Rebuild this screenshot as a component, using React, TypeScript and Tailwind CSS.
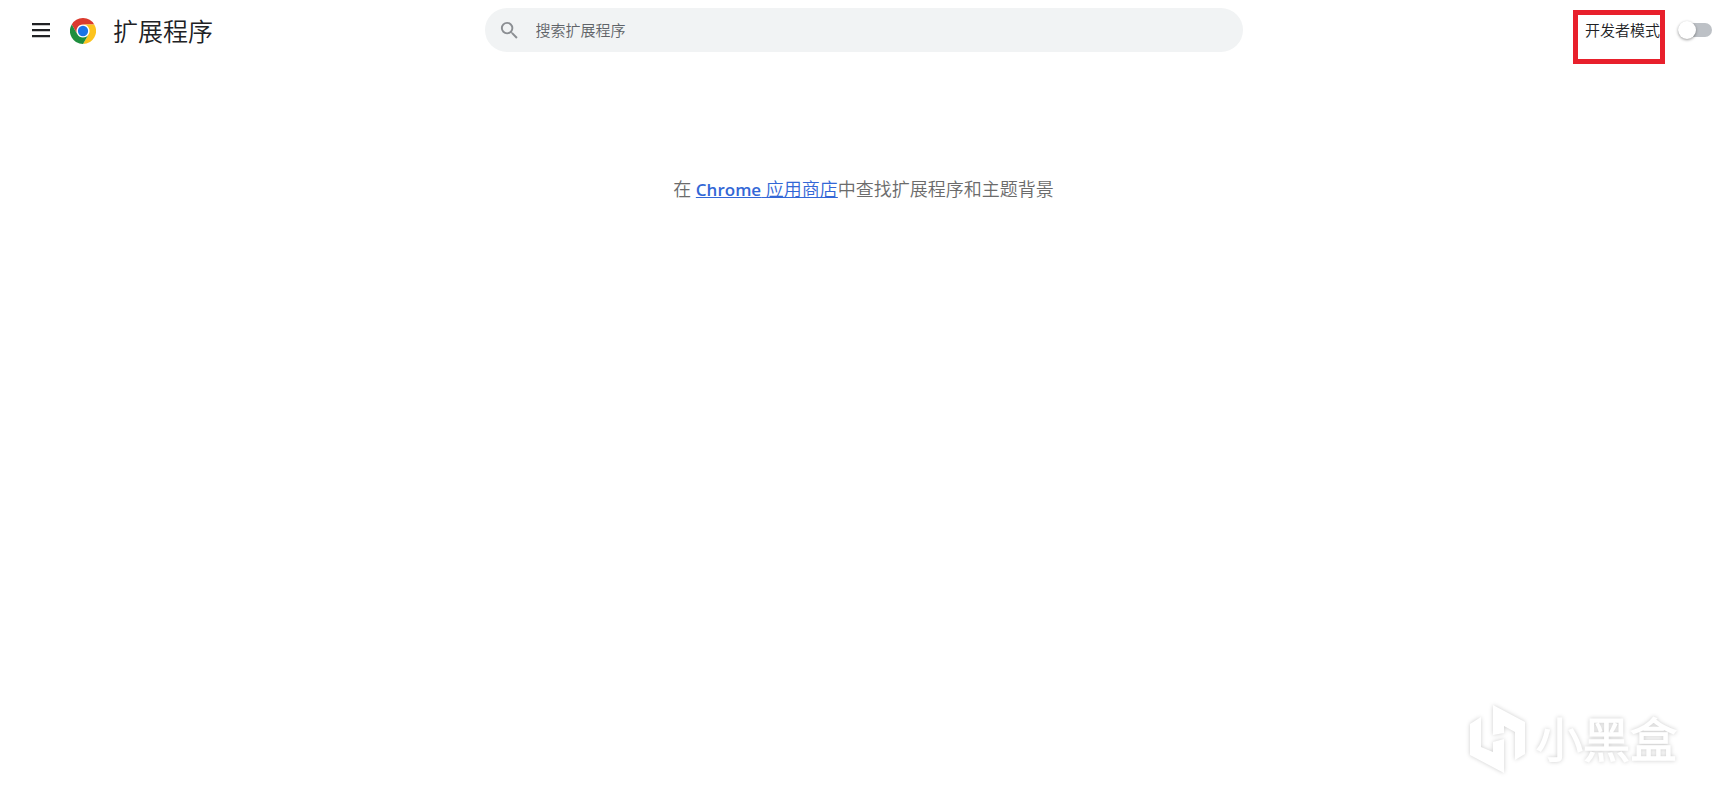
import React, { useState } from 'react';

const MenuIcon: React.FC = () => (
  <svg viewBox="0 0 24 24" className="h-6 w-6" fill="#202124" aria-hidden="true">
    <path d="M3 5h18v2.2H3V5zm0 6h18v2.2H3V11zm0 6h18v2.2H3V17z" />
  </svg>
);

const ChromeLogo: React.FC = () => (
  <svg viewBox="0 0 48 48" className="h-[26px] w-[26px]" aria-hidden="true">
    <circle cx="24" cy="24" r="12" fill="#fff" />
    <path d="M24 12H44.7812A23.9939 23.9939 0 0 0 3.2156 12.0029L13.6079 30L13.6172 29.9976A11.9852 11.9852 0 0 1 24 12Z" fill="#DB3B2E" />
    <circle cx="24" cy="24" r="9.5" fill="#1A73E8" />
    <path d="M34.3913 30.0029L24.0007 48A23.994 23.994 0 0 0 44.78 12.0031H23.9989L23.9962 12.0125A11.985 11.985 0 0 1 34.3913 30.0029Z" fill="#FCC31E" />
    <path d="M13.6086 30.0031L3.218 12.006A23.994 23.994 0 0 0 24.0025 48L34.3931 30.0029L34.3863 29.996A11.9852 11.9852 0 0 1 13.6086 30.0031Z" fill="#1E8E3E" />
  </svg>
);

const SearchIcon: React.FC = () => (
  <svg viewBox="0 0 24 24" className="h-[23px] w-[23px] shrink-0" fill="#8b8e92" aria-hidden="true">
    <path d="M15.5 14h-.79l-.28-.27A6.471 6.471 0 0 0 16 9.5 6.5 6.5 0 1 0 9.5 16c1.61 0 3.09-.59 4.23-1.57l.27.28v.79l5 4.99L20.49 19l-4.99-5zm-6 0C7.01 14 5 11.99 5 9.5S7.01 5 9.5 5 14 7.01 14 9.5 11.99 14 9.5 14z" />
  </svg>
);

const Watermark: React.FC = () => (
  <div className="pointer-events-none fixed right-[50px] bottom-5 flex items-center gap-2 drop-shadow-[0_0_2px_rgba(0,0,0,0.2)]">
    <svg viewBox="0 0 60 70" className="h-[70px] w-[60px]" fill="#fff" aria-hidden="true">
      <path d="M2 20 13 13V43L25 48V38L36 35V69L2 51Z" />
      <path d="M25 1 57 18V50L47 56V28L36 22V29L25 31Z" />
    </svg>
    <span className="text-[47px] leading-[60px] font-bold text-white">小黑盒</span>
  </div>
);

const App: React.FC = () => {
  const [query, setQuery] = useState('');
  const [devMode, setDevMode] = useState(false);

  return (
    <div className="min-h-screen bg-white font-['Open_Sans','Noto_Sans_CJK_SC_DemiLight','Noto_Sans_CJK_SC',sans-serif] font-[350]">
      <header className="grid h-[60px] grid-cols-[1fr_minmax(0,758px)_1fr] items-center px-[15px]">
        <div className="flex items-center pl-[14px]">
          <button type="button" aria-label="主菜单" className="mr-[17px]">
            <MenuIcon />
          </button>
          <div className="flex items-center pt-0.5">
            <ChromeLogo />
            <h1 className="ml-[17px] text-[25px] leading-8 text-[#202124]">扩展程序</h1>
          </div>
        </div>

        <label className="flex h-11 items-center rounded-full bg-[#f1f3f4] pr-4 pl-[13px]">
          <SearchIcon />
          <input
            type="text"
            aria-label="搜索扩展程序"
            placeholder="搜索扩展程序"
            value={query}
            onChange={(e) => setQuery(e.target.value)}
            className="ml-[15px] w-full bg-transparent text-[15px] leading-5 text-[#202124] outline-none placeholder:text-[#5f6368]"
          />
        </label>

        <div className="flex items-center justify-end">
          <label htmlFor="dev-mode" className="relative text-[15px] leading-5 text-[#202124]">
            开发者模式
            <span className="pointer-events-none absolute -top-[10px] -right-[5px] -left-[12px] h-[54px] border-[5px] border-[#e8202c]" />
          </label>
          <span className="relative ml-[18px] flex h-[18px] w-[34px] items-center">
            <input
              id="dev-mode"
              type="checkbox"
              role="switch"
              checked={devMode}
              onChange={(e) => setDevMode(e.target.checked)}
              className="peer h-[14px] w-full appearance-none rounded-full bg-[#bdc1c6] checked:bg-[#8ab4f8]"
            />
            <span className="pointer-events-none absolute left-0 h-[18px] w-[18px] rounded-full bg-white shadow-[0_1px_3px_rgba(0,0,0,0.4)] peer-checked:left-4 peer-checked:bg-[#1a73e8]" />
          </span>
        </div>
      </header>

      <main className="pt-[116px] text-center text-[18px] leading-[26px] text-[#6b6b6b]">
        <p>
          在{' '}
          <a href="#store" className="text-[#3367d6] underline">
            <span className="text-[17px] font-semibold">Chrome</span> 应用商店
          </a>
          中查找扩展程序和主题背景
        </p>
      </main>

      <Watermark />
    </div>
  );
};

export default App;
